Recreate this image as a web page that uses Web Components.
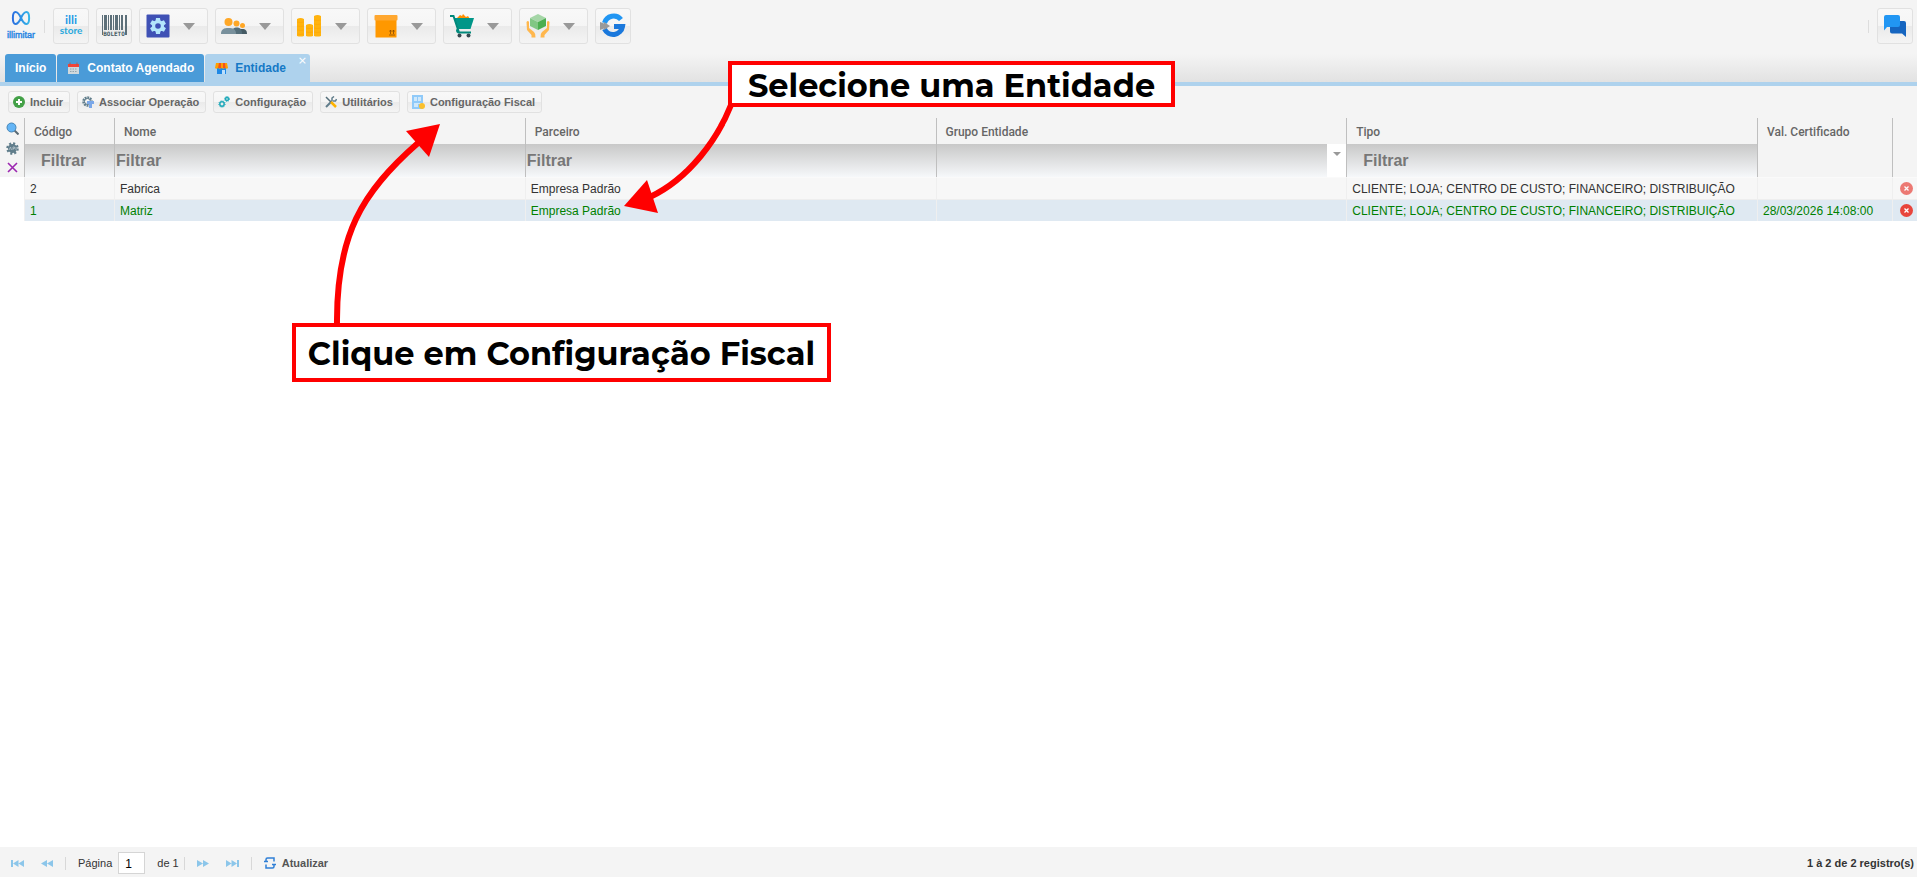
<!DOCTYPE html>
<html lang="pt-BR">
<head>
<meta charset="utf-8">
<title>Entidade</title>
<style>
	html, body {
		height: 100%;
		margin: 0;
	}

	body {
		font-family: "Liberation Sans", Arial, sans-serif;
		font-size: 12px;
		color: #333;
		background: #fff;
	}
</style>
</head>
<body>
<entity-page></entity-page>

<script>
const ICONS = {
	logo: `<svg viewBox="0 0 30 34" width="30" height="34">
		<defs><linearGradient id="g" x1="0" x2="1"><stop offset="0" stop-color="#2a6fe0"/><stop offset="1" stop-color="#35b5e8"/></linearGradient></defs>
		<path d="M15 9C13 4.500 11 3 9.500 3C6 3 6 15 9.500 15C11 15 13 13.500 15 9S19 3 20.500 3C24 3 24 15 20.500 15C19 15 17 13.500 15 9" fill="none" stroke="url(#g)" stroke-width="2"/>
		<text x="15" y="29" text-anchor="middle" font-family="Liberation Sans, sans-serif" font-size="9" fill="#2383e2" stroke="#2383e2" stroke-width=".4">illimitar</text></svg>`,
	store: `<svg viewBox="0 0 26 26" width="26" height="26" font-family="Lato, sans-serif">
		<text x="13" y="11" text-anchor="middle" font-weight="bold" font-size="12" fill="#1f9be6">illi</text>
		<text x="13" y="21" text-anchor="middle" font-size="10" font-weight="bold" fill="#2aa9dd">store</text></svg>`,
	boleto: `<svg viewBox="0 0 26 26" width="26" height="26">
		<path d="M1 2h1v20h-1zM3 2h3v15h-3zM7 2h1v15h-1zM9 2h2v15h-2zM12 2h1v15h-1zM14 2h3v15h-3zM18 2h1v15h-1zM20 2h2v15h-2zM24 2h2v20h-2z" fill="#5c6f79"/>
		<text x="13" y="23" text-anchor="middle" font-family="DejaVu Sans Mono, monospace" font-weight="bold" font-size="6" fill="#455a64">BOLETO</text></svg>`,
	gear: `<svg viewBox="0 0 24 24" width="24" height="24"><rect x=".5" y=".5" width="23" height="23" rx="1" fill="#3f51b5"/>
		<g fill="#b3e5fc"><circle cx="12" cy="12" r="6"/>
		<path id="t" d="M10 4h4l.6 4h-5.200zM10 20h4l.6-4h-5.200z"/><use href="#t" transform="rotate(60 12 12)"/><use href="#t" transform="rotate(120 12 12)"/></g>
		<circle cx="12" cy="12" r="2.800" fill="#3f51b5"/></svg>`,
	people: `<svg viewBox="0 0 26 24" width="26" height="24"><g fill="#ffa726"><circle cx="7.500" cy="8" r="4"/><circle cx="15.500" cy="9.500" r="3"/><circle cx="21.500" cy="11.500" r="2.500"/></g>
		<path d="M14 20c0-4 3-5 7-5s5 2 5 5z" fill="#455a64"/><path d="M10 20c0-5 3-6.500 6-6.500s5 2 5 6.500z" fill="#546e7a"/><path d="M0 20c0-5 3-6 7.500-6s7.500 1 7.500 6z" fill="#78909c"/></svg>`,
	coins: `<svg viewBox="0 0 26 24" width="26" height="24"><path d="M0 5q3.500-2 7 0v17q-3.500 1-7 0zM9 11q3.500-2 7 0v11q-3.500 1-7 0zM17 2q3.500-2 7 0v20q-3.500 1-7 0z" fill="#ffb30f"/>
		<path d="M0 8q3.500 1 7 0M0 12q3.500 1 7 0M0 16q3.500 1 7 0M0 20q3.500 1 7 0M9 14q3.500 1 7 0M9 18q3.500 1 7 0M17 6q3.500 1 7 0M17 10q3.500 1 7 0M17 14q3.500 1 7 0M17 18q3.500 1 7 0" fill="none" stroke="#ffa000" stroke-width=".5"/></svg>`,
	box: `<svg viewBox="0 0 24 24" width="24" height="24"><path d="M1.500 4h21v19q0 .500-.500.500h-20q-.500 0-.500-.500z" fill="#ff9800"/><rect x=".5" y="1" width="23" height="5.500" rx="1" fill="#ffa72f"/><path d="M15 21h6M16.500 20v-4M19.500 20v-4M15.500 17.500l1-1.500 1 1.500M18.500 17.500l1-1.500 1 1.500" stroke="#8a4b00" stroke-width=".8" fill="none"/></svg>`,
	cart: `<svg viewBox="0 0 26 26" width="26" height="26"><path d="M8 5l3-3 2 1 1-2 3 3 2-1 2 3z" fill="#ff8f00"/><path d="M5 5h20l-3.500 11h-12z" fill="#009688"/><path d="M1 3h3.500L10 19.500h12M9.500 15q-3 3 0 4.500" fill="none" stroke="#00897b" stroke-width="2"/><circle cx="10.500" cy="22.500" r="2" fill="#37474f"/><circle cx="19.500" cy="22.500" r="2" fill="#37474f"/></svg>`,
	hands: `<svg viewBox="0 0 24 26" width="24" height="26"><path d="M4 5l8-4 8 4-8 4z" fill="#a5d6a7"/><path d="M4 5l8 4v8l-8-4z" fill="#81c784"/><path d="M20 5l-8 4v8l8-4z" fill="#4caf50"/>
		<path d="M.5 9q1.500-2 2.500 0v6l5 4q2 2 1.500 5.500h-4V22L1 17zM23.500 9q-1.500-2-2.500 0v6l-5 4q-2 2-1.500 5.500h4V22l4.500-5z" fill="#ffb74d"/></svg>`,
	google: `<svg viewBox="0 0 26 26" width="26" height="26" fill="none" stroke-width="5"><path d="M21 6.500A9.500 9.500 0 0 0 4.500 10" stroke="#2196f3"/><path d="M4.500 16A9.500 9.500 0 0 0 22.500 13.500H14" stroke="#1a78dc"/><path d="M0 9l4 1.500V9l6 4-6 4v-1.500L0 17z" fill="#999"/></svg>`,
	chat: `<svg viewBox="0 0 24 24" width="24" height="24"><path d="M9 7h12q2 0 2 2v14l-4-3.500h-10q-2 0-2-2V9z" fill="#1565c0"/><path d="M3 1h12q2 0 2 2v8q0 2-2 2H4l-3 3.500V3q0-2 2-2z" fill="#2196f3"/></svg>`,
	calendar: `<svg viewBox="0 0 13 13" width="13" height="13"><rect x="1" y="2" width="11" height="10" fill="#cfd8dc"/><path d="M1 2h11v3h-11z" fill="#f44336"/><path d="M3 .500v3M10 .500v3" stroke="#b3574d"/><path d="M3 7h7M3 9.500h7" stroke="#90a4ae" stroke-dasharray="1.500 1"/></svg>`,
	shop: `<svg viewBox="0 0 13 13" width="13" height="13"><path d="M2 6h9v6h-9z" fill="#1e88e5"/><path d="M7 8h3v4h-3z" fill="#bbdefb"/><path d="M1 1h11l1 5q-1.500 1.500-3 0-2 1.500-3.500 0-2 1.500-3.500 0-1.500 1.500-3 0z" fill="#ffa000"/><path d="M4 1h2v5h-3zM8 1h2l.5 5h-2.500z" fill="#f4511e"/></svg>`,
	add: `<svg viewBox="0 0 12 12" width="12" height="12"><circle cx="6" cy="6" r="6" fill="#43a047"/><path d="M6 3v6M3 6h6" stroke="#fff" stroke-width="2"/></svg>`,
	link: `<svg viewBox="0 0 12 12" width="12" height="12"><circle cx="5.500" cy="5.500" r="4" fill="none" stroke="#607d8b" stroke-width="2.500" stroke-dasharray="1.800 .8"/><circle cx="5.500" cy="5.500" r="3" fill="none" stroke="#607d8b"/><path d="M5 5h7v3h-2v4h-3V8h-2z" fill="#7aa7e8"/></svg>`,
	cogs: `<svg viewBox="0 0 12 12" width="12" height="12" fill="none" stroke="#1fa9ba"><circle cx="4" cy="8" r="2.200" stroke-width="1.500"/><circle cx="4" cy="8" r="3.200" stroke-width="1" stroke-dasharray="1 1.200"/><circle cx="9" cy="3" r="1.500" stroke-width="1.500"/><circle cx="9" cy="3" r="2.500" stroke-dasharray="1 1"/></svg>`,
	tools: `<svg viewBox="0 0 12 12" width="12" height="12" fill="none"><path d="M1 11l6-6" stroke="#607d8b" stroke-width="2"/><path d="M7 5V2l2-1.500M8 5h2.500l1-2" stroke="#607d8b" stroke-width="1.500"/><path d="M1 1l5 5" stroke="#546e7a" stroke-width="1.500"/><path d="M6 6l5 5" stroke="#ffb300" stroke-width="2.500"/></svg>`,
	fiscal: `<svg viewBox="0 0 13 14" width="13" height="14"><path d="M0 0h11v14h-11z" fill="#90caf9"/><path d="M2 2h3v4h-3zM6 2h3v4h-3zM2 8h7v1h-3v3h-4z" fill="#cfe8fb"/><circle cx="10" cy="11" r="3" fill="#fbc02d"/></svg>`,
	search: `<svg viewBox="0 0 13 13" width="13" height="13"><path d="M8.500 8.500l4 4" stroke="#5b6b75" stroke-width="2"/><circle cx="5.500" cy="5.500" r="4.500" fill="#64b5f6" stroke="#4685b5"/></svg>`,
	api: `<svg viewBox="0 0 13 13" width="13" height="13"><circle cx="6.500" cy="6.500" r="4.500" fill="#607d8b"/><circle cx="6.500" cy="6.500" r="5" fill="none" stroke="#607d8b" stroke-width="2.500" stroke-dasharray="2 1.927"/><path d="M3 8l1.500-3 1 3M7 8V5h1.500v1.500H7M10 5v3" fill="none" stroke="#b6c4cb" stroke-width=".8"/></svg>`,
	clear: `<svg viewBox="0 0 11 11" width="11" height="11"><path d="M1 1q4 4 9 9M10 1q-4 4-9 9" fill="none" stroke="#9c27b0" stroke-width="1.600"/></svg>`,
	remove: `<svg viewBox="0 0 13 13" width="13" height="13"><circle cx="6.500" cy="6.500" r="6.500" fill="#e8453c"/><path d="M4.500 4.500l4 4M8.500 4.500l-4 4" stroke="#fff" stroke-width="1.300"/></svg>`,
	first: `<svg viewBox="0 0 13 10" width="13" height="10" fill="#8cc6ea"><path d="M0 2h2v7h-2zM7.500 2v7L2 5.500zM13 2v7L7.500 5.500z"/></svg>`,
	prev: `<svg viewBox="0 0 12 10" width="12" height="10" fill="#8cc6ea"><path d="M6 2v7L0 5.500zM12 2v7L6 5.500z"/></svg>`,
	next: `<svg viewBox="0 0 12 10" width="12" height="10" fill="#8cc6ea"><path d="M0 2v7l6-3.500zM6 2v7l6-3.500z"/></svg>`,
	last: `<svg viewBox="0 0 13 10" width="13" height="10" fill="#8cc6ea"><path d="M11 2h2v7h-2zM0 2v7l5.500-3.500zM5.500 2v7L11 5.500z"/></svg>`,
	refresh: `<svg viewBox="0 0 12 12" width="12" height="12" fill="none" stroke="#2f7fd6" stroke-width="1.500"><path d="M5 1H3.500Q2 1 2 2.500V5M7 11h1.500q1.500 0 1.500-1.500V7M5 1h5v3.500M7 11h-5V7.500M0 4.500h4M8 7.500h4"/></svg>`
};

class AppIcon extends HTMLElement {
	constructor() {
		super();
		this.attachShadow({ mode: "open" });
	}

	connectedCallback() {
		this.shadowRoot.innerHTML = `
			<style>
				:host { display: inline-flex; flex: none; justify-content: center; }
				svg { display: block; }
			</style>
			${ICONS[this.getAttribute("name")]}
		`;
	}
}

// Main menu button, with an arrow when it opens a submenu
class MenuButton extends HTMLElement {
	constructor() {
		super();
		this.attachShadow({ mode: "open" });
	}

	connectedCallback() {
		const arrow = this.hasAttribute("menu") ? "<i></i>" : "";
		this.shadowRoot.innerHTML = `
			<style>
				:host { display: block; }
				button {
					display: flex;
					align-items: center;
					justify-content: center;
					box-sizing: border-box;
					min-width: 36px;
					height: 36px;
					padding: 0;
					border: 1px solid #e1e1e1;
					border-radius: 3px;
					background: linear-gradient(#f8f8f8, #f5f5f5 50%, #eaeaea 50%, #f4f4f4);
					cursor: pointer;
				}
				:host([menu]) button {
					width: 69px;
					justify-content: space-between;
					padding: 0 12px 0 4px;
				}
				:host([menu]) app-icon { width: 28px; }
				button:hover { border-color: #bbb; }
				i {
					border: 6px solid transparent;
					border-top: 7px solid #999;
					border-bottom: 0;
				}
			</style>
			<button type="button" aria-label="${this.getAttribute("label")}">
				<app-icon name="${this.getAttribute("icon")}"></app-icon>${arrow}
			</button>
		`;
	}
}

class MainMenu extends HTMLElement {
	constructor() {
		super();
		this.attachShadow({ mode: "open" });
		this.shadowRoot.innerHTML = `
			<style>
				:host {
					display: flex;
					align-items: center;
					gap: 7px;
					padding: 8px 4px 10px 6px;
				}
				hr {
					width: 1px;
					height: 13px;
					margin: 0 1px;
					border: 0;
					background: #ddd;
				}
				.space { flex: 1; }
			</style>
			<app-icon name="logo"></app-icon>
			<hr>
			<menu-button icon="store" label="Illi Store"></menu-button>
			<menu-button icon="boleto" label="Boleto"></menu-button>
			<menu-button menu icon="gear" label="Sistema"></menu-button>
			<menu-button menu icon="people" label="Pessoas"></menu-button>
			<menu-button menu icon="coins" label="Financeiro"></menu-button>
			<menu-button menu icon="box" label="Estoque"></menu-button>
			<menu-button menu icon="cart" label="Vendas"></menu-button>
			<menu-button menu icon="hands" label="Produtos"></menu-button>
			<menu-button icon="google" label="Google"></menu-button>
			<span class="space"></span>
			<hr>
			<menu-button icon="chat" label="Chat"></menu-button>
		`;
	}
}

class PageTab extends HTMLElement {
	constructor() {
		super();
		this.attachShadow({ mode: "open" });
	}

	connectedCallback() {
		const icon = this.getAttribute("icon");
		this.shadowRoot.innerHTML = `
			<style>
				:host { display: block; position: relative; }
				.tab {
					display: flex;
					align-items: center;
					gap: 7px;
					height: 28px;
					padding: 0 10px;
					border: 0;
					border-radius: 3px 3px 0 0;
					background: #4a9bd8;
					color: #fff;
					font: bold 12px "Liberation Sans", sans-serif;
				}
				:host([active]) .tab {
					padding-right: 24px;
					background: #aed2ed;
					color: #1579c6;
				}
				.close {
					position: absolute;
					top: 2px;
					right: 3px;
					padding: 0;
					border: 0;
					background: none;
					color: #fff;
					font: 11px/10px "DejaVu Sans", sans-serif;
				}
			</style>
			<button type="button" class="tab">
				${icon ? `<app-icon name="${icon}"></app-icon>` : ""}
				<slot></slot>
			</button>
			${this.hasAttribute("active") ? '<button type="button" class="close" aria-label="Fechar">×</button>' : ""}
		`;
	}
}

class TabBar extends HTMLElement {
	constructor() {
		super();
		this.attachShadow({ mode: "open" });
		this.shadowRoot.innerHTML = `
			<style>
				:host {
					display: flex;
					gap: 1px;
					padding: 0 5px;
					border-bottom: 4px solid #aed2ed;
					background: linear-gradient(#f4f4f4, #e2e2e2);
				}
			</style>
			<slot></slot>
		`;
	}
}

class ToolButton extends HTMLElement {
	constructor() {
		super();
		this.attachShadow({ mode: "open" });
	}

	connectedCallback() {
		this.shadowRoot.innerHTML = `
			<style>
				:host { display: block; }
				button {
					display: flex;
					align-items: center;
					gap: 5px;
					height: 22px;
					padding: 0 6px 0 4px;
					border: 1px solid #e1e1e1;
					border-radius: 3px;
					background: linear-gradient(#f8f8f8, #f5f5f5 50%, #eaeaea 50%, #f4f4f4);
					color: #666;
					font: bold 11px "Liberation Sans", sans-serif;
					cursor: pointer;
				}
				button:hover { border-color: #bbb; }
			</style>
			<button type="button"><app-icon name="${this.getAttribute("icon")}"></app-icon><slot></slot></button>
		`;
	}
}

class EntityGrid extends HTMLElement {
	constructor() {
		super();
		this.attachShadow({ mode: "open" });
		this.rows = [
			{ id: 2, name: "Fabrica", partner: "Empresa Padrão", group: "", type: "CLIENTE; LOJA; CENTRO DE CUSTO; FINANCEIRO; DISTRIBUIÇÃO", cert: "" },
			{ id: 1, name: "Matriz", partner: "Empresa Padrão", group: "", type: "CLIENTE; LOJA; CENTRO DE CUSTO; FINANCEIRO; DISTRIBUIÇÃO", cert: "28/03/2026 14:08:00", selected: true }
		];

		this.shadowRoot.innerHTML = `
			<style>
				:host { display: block; }
				table {
					width: 100%;
					table-layout: fixed;
					border-collapse: separate;
					border-spacing: 0;
				}
				th {
					padding: 0;
					background: #f4f4f4;
					border-left: 1px solid #bfbfbf;
					text-align: left;
					vertical-align: top;
					font: 500 12px Roboto, sans-serif;
					color: #666;
				}
				th.side { border-left: 0; }
				.label { height: 26px; line-height: 28px; padding-left: 9px; }
				.filter { height: 33px; background: linear-gradient(#c8c8c8, #f6f8fa); }
				.filter > div { display: flex; height: 33px; }
				input, select {
					flex: 1;
					min-width: 0;
					box-sizing: border-box;
					height: 33px;
					padding: 0 1px;
					border: 0;
					background: none;
					outline: none;
					appearance: none;
					color: #777;
					font: bold 16px "Liberation Sans", sans-serif;
				}
				input.wide { padding-left: 16px; }
				input::placeholder { color: #777; opacity: 1; }
				.open {
					display: flex;
					justify-content: center;
					width: 19px;
					padding: 8px 0 0;
					border: 0;
					background: #fff;
				}
				.open::before {
					content: "";
					border: 4px solid transparent;
					border-top-color: #999;
					border-bottom: 0;
				}
				.tools {
					display: flex;
					flex-direction: column;
					align-items: center;
					gap: 7px;
					padding-top: 4px;
				}
				.tools button, .del {
					display: flex;
					padding: 0;
					border: 0;
					background: none;
					cursor: pointer;
				}
				.del { margin: auto; }
				td {
					box-sizing: border-box;
					height: 22px;
					padding: 0 0 0 5px;
					background: #f7f7f7;
					border-left: 1px solid #efefef;
					border-top: 1px solid #fafafa;
					white-space: nowrap;
					overflow: hidden;
				}
				td.side { background: none; border-color: transparent; }
				td.last { padding: 0 0 0 3px; }
				.selected td:not(.side) { background: #dfe9f2; color: #008000; border-top-color: #eee; }
				tr:not(.selected) .del { opacity: 0.7; }
			</style>
			<table>
				<colgroup>
					<col style="width: 24px"><col style="width: 90px"><col><col><col><col>
					<col style="width: 135px"><col style="width: 25px">
				</colgroup>
				<thead>
					<tr>
						<th rowspan="2" class="side">
							<div class="tools">
								<button type="button" aria-label="Pesquisar"><app-icon name="search"></app-icon></button>
								<button type="button" aria-label="API"><app-icon name="api"></app-icon></button>
								<button type="button" aria-label="Limpar"><app-icon name="clear"></app-icon></button>
							</div>
						</th>
						<th><div class="label">Código</div></th>
						<th><div class="label">Nome</div></th>
						<th><div class="label">Parceiro</div></th>
						<th><div class="label">Grupo Entidade</div></th>
						<th><div class="label">Tipo</div></th>
						<th rowspan="2"><div class="label">Val. Certificado</div></th>
						<th rowspan="2"></th>
					</tr>
					<tr>
						<th class="filter"><div><input class="wide" placeholder="Filtrar" aria-label="Código"></div></th>
						<th class="filter"><div><input placeholder="Filtrar" aria-label="Nome"></div></th>
						<th class="filter"><div><input placeholder="Filtrar" aria-label="Parceiro"></div></th>
						<th class="filter"><div><select aria-label="Grupo Entidade"><option></option></select><button type="button" class="open" aria-label="Abrir"></button></div></th>
						<th class="filter"><div><input class="wide" placeholder="Filtrar" aria-label="Tipo"></div></th>
					</tr>
				</thead>
				<tbody></tbody>
			</table>
		`;
		this.displayRows();
	}

	displayRows() {
		const tbody = this.shadowRoot.querySelector("tbody");
		this.rows.forEach((row) => {
			const tr = document.createElement("tr");
			tr.className = row.selected ? "selected" : "";
			tr.innerHTML = `
				<td class="side"></td>
				<td>${row.id}</td>
				<td>${row.name}</td>
				<td>${row.partner}</td>
				<td>${row.group}</td>
				<td>${row.type}</td>
				<td>${row.cert}</td>
				<td class="last"><button type="button" class="del" aria-label="Excluir"><app-icon name="remove"></app-icon></button></td>
			`;
			tbody.appendChild(tr);
		});
	}
}

class PagerBar extends HTMLElement {
	constructor() {
		super();
		this.attachShadow({ mode: "open" });
		this.shadowRoot.innerHTML = `
			<style>
				:host {
					display: flex;
					align-items: center;
					box-sizing: border-box;
					height: 30px;
					padding: 2px 3px 0 11px;
					background: #f4f4f4;
					color: #333;
					font-size: 11px;
				}
				button {
					display: flex;
					align-items: center;
					gap: 6px;
					padding: 0;
					border: 0;
					background: none;
					color: #555;
					font: bold 11px "Liberation Sans", sans-serif;
				}
				.nav { display: flex; align-items: center; gap: 17px; }
				hr {
					width: 1px;
					height: 13px;
					margin: 0 12px;
					border: 0;
					background: #d8d8d8;
				}
				label { display: flex; align-items: center; gap: 6px; }
				input {
					box-sizing: border-box;
					width: 27px;
					height: 22px;
					padding: 2px 6px 0;
					border: 1px solid #d5d5d5;
					background: #fff;
					font: 12px "Liberation Sans", sans-serif;
					color: #000;
				}
				.total { margin-left: 12px; }
				.total + hr { margin-left: 5px; }
				.count { margin-left: auto; font: bold 11px "Liberation Sans", sans-serif; color: #333; }
			</style>
			<div class="nav">
				<button type="button" aria-label="Primeira"><app-icon name="first"></app-icon></button>
				<button type="button" aria-label="Anterior"><app-icon name="prev"></app-icon></button>
			</div>
			<hr>
			<label>Página <input value="1"></label>
			<span class="total">de 1</span>
			<hr>
			<div class="nav">
				<button type="button" aria-label="Próxima"><app-icon name="next"></app-icon></button>
				<button type="button" aria-label="Última"><app-icon name="last"></app-icon></button>
			</div>
			<hr>
			<button type="button"><app-icon name="refresh"></app-icon>Atualizar</button>
			<span class="count">1 à 2 de 2 registro(s)</span>
		`;
	}
}

// Boxed instruction floating over the page
class HelpNote extends HTMLElement {
	constructor() {
		super();
		this.attachShadow({ mode: "open" });
		this.shadowRoot.innerHTML = `
			<style>
				:host {
					position: absolute;
					display: flex;
					align-items: center;
					justify-content: center;
					box-sizing: border-box;
					padding-top: 3px;
					border: 4px solid #f00;
					background: #fff;
					color: #000;
					font: bold 32px/34px Montserrat, Inter, sans-serif;
					font-variant-ligatures: none;
					white-space: nowrap;
				}
			</style>
			<slot></slot>
		`;
	}
}

class HelpArrows extends HTMLElement {
	constructor() {
		super();
		this.attachShadow({ mode: "open" });
		this.shadowRoot.innerHTML = `
			<style>
				:host {
					position: absolute;
					top: 0;
					left: 0;
					pointer-events: none;
				}
				svg { display: block; }
			</style>
			<svg width="760" height="340" viewBox="0 0 760 340">
				<g fill="none" stroke="#f00" stroke-width="6">
					<path d="M337 325C336 235 362 192 418 143"/>
					<path d="M731 105C718 138 690 178 650 197"/>
				</g>
				<g fill="#f00">
					<path d="M440 124L406 131L429 157z"/>
					<path d="M624 206L647 180L658 213z"/>
				</g>
			</svg>
		`;
	}
}

class EntityPage extends HTMLElement {
	constructor() {
		super();
		this.attachShadow({ mode: "open" });
		this.shadowRoot.innerHTML = `
			<style>
				:host {
					position: relative;
					display: flex;
					flex-direction: column;
					min-height: 100%;
				}
				.top { background: #f4f4f4; }
				.toolbar {
					display: flex;
					gap: 7px;
					padding: 5px 8px;
					background: #f4f4f4;
				}
				entity-grid { flex: 1; }
				.pick { top: 61px; left: 728px; width: 447px; height: 46px; }
				.open { top: 323px; left: 292px; width: 539px; height: 59px; }
			</style>
			<header class="top">
				<main-menu></main-menu>
				<tab-bar>
					<page-tab>Início</page-tab>
					<page-tab icon="calendar">Contato Agendado</page-tab>
					<page-tab icon="shop" active>Entidade</page-tab>
				</tab-bar>
			</header>
			<div class="toolbar">
				<tool-button icon="add">Incluir</tool-button>
				<tool-button icon="link">Associar Operação</tool-button>
				<tool-button icon="cogs">Configuração</tool-button>
				<tool-button icon="tools">Utilitários</tool-button>
				<tool-button icon="fiscal">Configuração Fiscal</tool-button>
			</div>
			<entity-grid></entity-grid>
			<pager-bar></pager-bar>
			<help-arrows></help-arrows>
			<help-note class="pick">Selecione uma Entidade</help-note>
			<help-note class="open">Clique em Configuração Fiscal</help-note>
		`;
	}
}

customElements.define("app-icon", AppIcon);
customElements.define("menu-button", MenuButton);
customElements.define("main-menu", MainMenu);
customElements.define("page-tab", PageTab);
customElements.define("tab-bar", TabBar);
customElements.define("tool-button", ToolButton);
customElements.define("entity-grid", EntityGrid);
customElements.define("pager-bar", PagerBar);
customElements.define("help-note", HelpNote);
customElements.define("help-arrows", HelpArrows);
customElements.define("entity-page", EntityPage);
</script>
</body>
</html>
